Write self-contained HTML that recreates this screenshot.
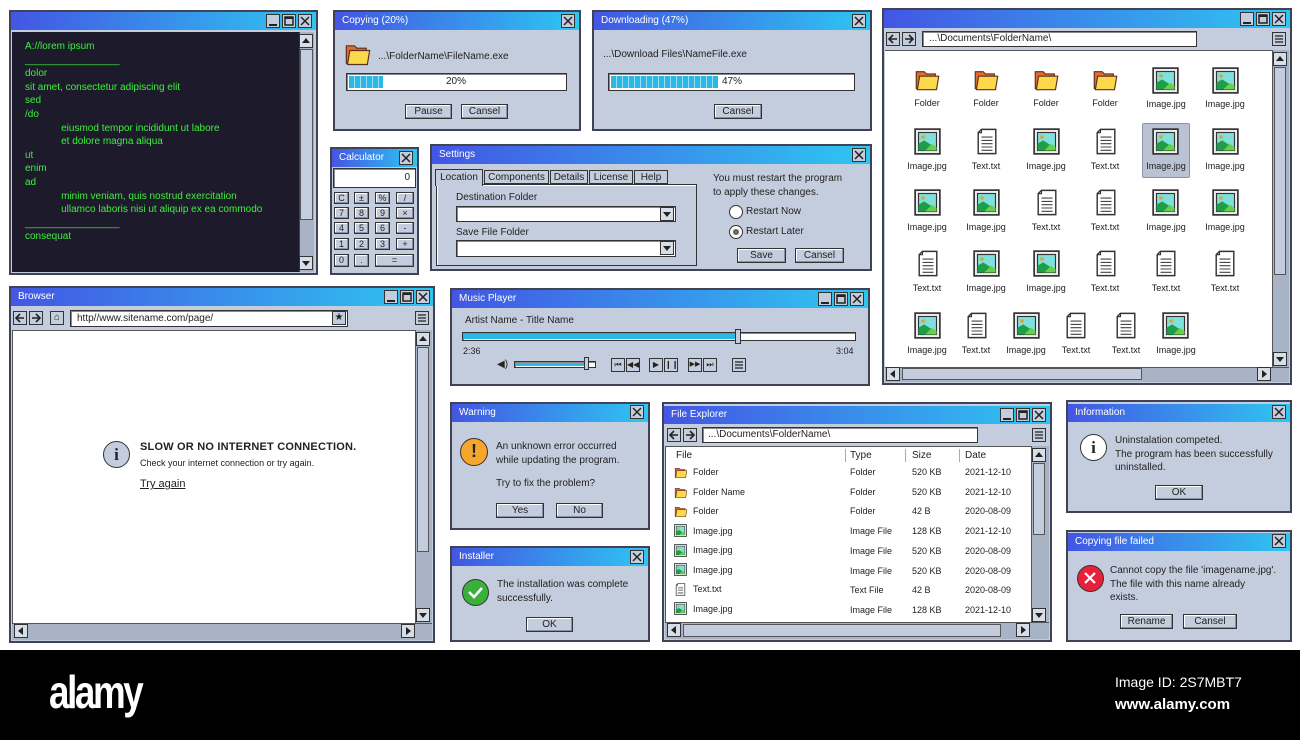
<!DOCTYPE html>
<html><head><meta charset="utf-8"><style>
*{margin:0;padding:0;box-sizing:border-box}
body{width:1300px;height:740px;background:#fff;position:relative;overflow:hidden;font-family:"Liberation Sans",sans-serif;font-size:10px;color:#222}
.a{position:absolute}
.w{position:absolute;background:#c4cddd;border:2px solid #404356}
.t{position:absolute;background:linear-gradient(90deg,#4356e4,#2ec6f1);color:#fff;font-size:10px;line-height:18px;padding-left:7px;height:18px}
.cb{position:absolute;width:14px;height:14px;border:1px solid #333;background:#c4cddd}
.cb svg{display:block}
.btn{position:absolute;border:1px solid #333;background:#c4cddd;box-shadow:inset -1px -1px 0 #8a90a4,inset 1px 1px 0 #fff;text-align:center;font-size:10px;line-height:13px;height:15px}
.in{position:absolute;background:#fff;border:1px solid #333;box-shadow:inset 1px 1px 0 #888}
.g{color:#3cf03c;font-size:10px;line-height:13.6px;white-space:pre}
.sb{position:absolute;background:#a9b3c6;border-left:1px solid #555}
.lbl{position:absolute;font-size:9px;text-align:center;width:60px}
.ic{position:absolute}
.row{position:absolute;font-size:9px}
</style></head><body>
<svg width="0" height="0" style="position:absolute">
<defs>
<symbol id="fo" viewBox="0 0 24 22"><path d="M2 4h7l2 2h8v13H2z" fill="#e4692a" stroke="#5a3020"/><path d="M5 8h17l-2 12H3z" fill="#fbd94a" stroke="#5a3020"/></symbol>
<symbol id="im" viewBox="0 0 24 24"><rect x="1" y="1" width="22" height="22" fill="#eee" stroke="#333" stroke-width="1.5"/><rect x="4" y="4" width="16" height="16" fill="#7fe0dc" stroke="#333"/><circle cx="8" cy="8" r="1.6" fill="#e6a030"/><path d="M4 20v-6l5-3 11 7v2z" fill="#1e9e48"/><path d="M10 20l6-6 4 3v3z" fill="#66d24a"/></symbol>
<symbol id="tx" viewBox="0 0 20 24"><path d="M5 1h13v22H2V4z" fill="#fff" stroke="#333" stroke-width="1.3"/><path d="M5 1v3H2" fill="none" stroke="#333"/><path d="M5 8h10M5 11h10M5 14h10M5 17h10M5 20h10" stroke="#444"/></symbol>
<symbol id="x" viewBox="0 0 12 12"><path d="M2 2l8 8M10 2l-8 8" stroke="#222" stroke-width="1.5"/></symbol>
<symbol id="mn" viewBox="0 0 12 12"><path d="M2 10h8" stroke="#222" stroke-width="2"/></symbol>
<symbol id="mx" viewBox="0 0 12 12"><rect x="2" y="2" width="8" height="8" fill="none" stroke="#222" stroke-width="1.5"/><path d="M2 3h8" stroke="#222" stroke-width="2"/></symbol>
<symbol id="up" viewBox="0 0 12 12"><path d="M2 8l4-5 4 5z" fill="#222"/></symbol>
<symbol id="dn" viewBox="0 0 12 12"><path d="M2 4l4 5 4-5z" fill="#222"/></symbol>
<symbol id="lf" viewBox="0 0 12 12"><path d="M8 2l-5 4 5 4z" fill="#222"/></symbol>
<symbol id="rt" viewBox="0 0 12 12"><path d="M4 2l5 4-5 4z" fill="#222"/></symbol>
<symbol id="bk" viewBox="0 0 12 12"><path d="M10 6H2M6 2L2 6l4 4" fill="none" stroke="#222" stroke-width="1.6"/></symbol>
<symbol id="fw" viewBox="0 0 12 12"><path d="M2 6h8M6 2l4 4-4 4" fill="none" stroke="#222" stroke-width="1.6"/></symbol>
<symbol id="mu" viewBox="0 0 12 12"><path d="M2 3h8M2 6h8M2 9h8" stroke="#222" stroke-width="1.2"/></symbol>
</defs></svg>

<!-- Terminal -->
<div class="w" style="left:9px;top:10px;width:309px;height:265px"></div>
<div class="t" style="left:11px;top:12px;width:305px"></div>
<div class="cb" style="left:266px;top:14px"><svg width="12" height="12"><use href="#mn"/></svg></div>
<div class="cb" style="left:282px;top:14px"><svg width="12" height="12"><use href="#mx"/></svg></div>
<div class="cb" style="left:298px;top:14px"><svg width="12" height="12"><use href="#x"/></svg></div>
<div class="a" style="left:12px;top:32px;width:287px;height:240px;background:#1d1b2b"></div>
<div class="a" style="left:299px;top:32px;width:15px;height:240px;background:#a9b3c6;border-left:1px solid #444"></div>
<div class="cb" style="left:299px;top:34px;background:#d8dee8"><svg width="12" height="12"><use href="#up"/></svg></div>
<div class="a" style="left:300px;top:49px;width:13px;height:171px;background:#c4cddd;border:1px solid #555"></div>
<div class="cb" style="left:299px;top:256px;background:#d8dee8"><svg width="12" height="12"><use href="#dn"/></svg></div>
<div class="a g" style="left:25px;top:40px">A://lorem ipsum
_________________
dolor
sit amet, consectetur adipiscing elit
sed
/do
             eiusmod tempor incididunt ut labore
             et dolore magna aliqua
ut
enim
ad
             minim veniam, quis nostrud exercitation
             ullamco laboris nisi ut aliquip ex ea commodo
_________________
consequat</div>

<!-- Copying -->
<div class="w" style="left:333px;top:10px;width:248px;height:121px"></div>
<div class="t" style="left:335px;top:12px;width:244px">Copying (20%)</div>
<div class="cb" style="left:561px;top:14px"><svg width="12" height="12"><use href="#x"/></svg></div>
<svg class="ic" style="left:344px;top:41px" width="28" height="26"><use href="#fo"/></svg>
<div class="a" style="left:378px;top:51px;font-size:10px">...\FolderName\FileName.exe</div>
<div class="in" style="left:346px;top:73px;width:221px;height:18px"></div>
<div class="a" style="left:349px;top:76px;width:34px;height:12px;background:repeating-linear-gradient(90deg,#2bb8e6 0 5px,#9be0f5 5px 6px)"></div>
<div class="a" style="left:446px;top:76px">20%</div>
<div class="btn" style="left:405px;top:104px;width:47px">Pause</div>
<div class="btn" style="left:461px;top:104px;width:47px">Cansel</div>

<!-- Downloading -->
<div class="w" style="left:592px;top:10px;width:280px;height:121px"></div>
<div class="t" style="left:594px;top:12px;width:276px">Downloading (47%)</div>
<div class="cb" style="left:852px;top:14px"><svg width="12" height="12"><use href="#x"/></svg></div>
<div class="a" style="left:603px;top:49px">...\Download Files\NameFile.exe</div>
<div class="in" style="left:608px;top:73px;width:247px;height:18px"></div>
<div class="a" style="left:611px;top:76px;width:107px;height:12px;background:repeating-linear-gradient(90deg,#2bb8e6 0 5px,#9be0f5 5px 6px)"></div>
<div class="a" style="left:722px;top:76px">47%</div>
<div class="btn" style="left:714px;top:104px;width:48px">Cansel</div>

<!-- Calculator -->
<div class="w" style="left:330px;top:147px;width:89px;height:128px"></div>
<div class="t" style="left:332px;top:149px;width:85px">Calculator</div>
<div class="cb" style="left:399px;top:151px"><svg width="12" height="12"><use href="#x"/></svg></div>
<div class="in" style="left:333px;top:168px;width:83px;height:20px"><span class="a" style="right:5px;top:3px">0</span></div>
<div class="btn" style="left:334px;top:192px;width:15px;height:12px;line-height:10px;font-size:9px">C</div>
<div class="btn" style="left:354px;top:192px;width:15px;height:12px;line-height:10px;font-size:9px">±</div>
<div class="btn" style="left:375px;top:192px;width:15px;height:12px;line-height:10px;font-size:9px">%</div>
<div class="btn" style="left:396px;top:192px;width:18px;height:12px;line-height:10px;font-size:9px">/</div>
<div class="btn" style="left:334px;top:207px;width:15px;height:12px;line-height:10px;font-size:9px">7</div>
<div class="btn" style="left:354px;top:207px;width:15px;height:12px;line-height:10px;font-size:9px">8</div>
<div class="btn" style="left:375px;top:207px;width:15px;height:12px;line-height:10px;font-size:9px">9</div>
<div class="btn" style="left:396px;top:207px;width:18px;height:12px;line-height:10px;font-size:9px">×</div>
<div class="btn" style="left:334px;top:222px;width:15px;height:12px;line-height:10px;font-size:9px">4</div>
<div class="btn" style="left:354px;top:222px;width:15px;height:12px;line-height:10px;font-size:9px">5</div>
<div class="btn" style="left:375px;top:222px;width:15px;height:12px;line-height:10px;font-size:9px">6</div>
<div class="btn" style="left:396px;top:222px;width:18px;height:12px;line-height:10px;font-size:9px">-</div>
<div class="btn" style="left:334px;top:238px;width:15px;height:12px;line-height:10px;font-size:9px">1</div>
<div class="btn" style="left:354px;top:238px;width:15px;height:12px;line-height:10px;font-size:9px">2</div>
<div class="btn" style="left:375px;top:238px;width:15px;height:12px;line-height:10px;font-size:9px">3</div>
<div class="btn" style="left:396px;top:238px;width:18px;height:12px;line-height:10px;font-size:9px">+</div>
<div class="btn" style="left:334px;top:254px;width:15px;height:13px;line-height:11px;font-size:9px">0</div>
<div class="btn" style="left:354px;top:254px;width:15px;height:13px;line-height:11px;font-size:9px">.</div>
<div class="btn" style="left:375px;top:254px;width:39px;height:13px;line-height:11px;font-size:9px">=</div>

<!-- Settings -->
<div class="w" style="left:430px;top:144px;width:442px;height:127px"></div>
<div class="t" style="left:432px;top:146px;width:438px">Settings</div>
<div class="cb" style="left:852px;top:148px"><svg width="12" height="12"><use href="#x"/></svg></div>
<div class="a" style="left:436px;top:184px;width:261px;height:82px;border:1px solid #333;box-shadow:inset 1px 1px 0 #fff"></div>
<div class="a" style="left:435px;top:169px;width:48px;height:17px;border:1px solid #333;border-bottom:none;background:#c4cddd;text-align:center;line-height:15px">Location</div>
<div class="a" style="left:484px;top:170px;width:65px;height:14px;border:1px solid #333;text-align:center;line-height:13px">Components</div>
<div class="a" style="left:550px;top:170px;width:38px;height:14px;border:1px solid #333;text-align:center;line-height:13px">Details</div>
<div class="a" style="left:589px;top:170px;width:44px;height:14px;border:1px solid #333;text-align:center;line-height:13px">License</div>
<div class="a" style="left:634px;top:170px;width:34px;height:14px;border:1px solid #333;text-align:center;line-height:13px">Help</div>
<div class="a" style="left:456px;top:192px">Destination Folder</div>
<div class="in" style="left:456px;top:206px;width:220px;height:16px"></div>
<div class="cb" style="left:660px;top:207px;background:#d8dee8"><svg width="12" height="12"><use href="#dn"/></svg></div>
<div class="a" style="left:456px;top:227px">Save File Folder</div>
<div class="in" style="left:456px;top:240px;width:220px;height:17px"></div>
<div class="cb" style="left:660px;top:241px;background:#d8dee8"><svg width="12" height="12"><use href="#dn"/></svg></div>
<div class="a" style="left:713px;top:172px;line-height:14px">You must restart the program<br>to apply these changes.</div>
<div class="a" style="left:729px;top:205px;width:14px;height:14px;border-radius:50%;background:#fff;border:1px solid #333"></div>
<div class="a" style="left:746px;top:206px">Restart Now</div>
<div class="a" style="left:729px;top:225px;width:14px;height:14px;border-radius:50%;background:#fff;border:1px solid #333"><div class="a" style="left:3px;top:3px;width:6px;height:6px;border-radius:50%;background:#666"></div></div>
<div class="a" style="left:746px;top:226px">Restart Later</div>
<div class="btn" style="left:737px;top:248px;width:49px">Save</div>
<div class="btn" style="left:795px;top:248px;width:49px">Cansel</div>

<!-- Explorer icons -->
<div class="w" style="left:882px;top:8px;width:410px;height:377px"></div>
<div class="t" style="left:884px;top:10px;width:406px"></div>
<div class="cb" style="left:1240px;top:12px"><svg width="12" height="12"><use href="#mn"/></svg></div>
<div class="cb" style="left:1256px;top:12px"><svg width="12" height="12"><use href="#mx"/></svg></div>
<div class="cb" style="left:1272px;top:12px"><svg width="12" height="12"><use href="#x"/></svg></div>
<div class="cb" style="left:886px;top:32px"><svg width="12" height="12"><use href="#bk"/></svg></div>
<div class="cb" style="left:902px;top:32px"><svg width="12" height="12"><use href="#fw"/></svg></div>
<div class="in" style="left:922px;top:31px;width:275px;height:16px;padding-left:6px;line-height:14px">...\Documents\FolderName\</div>
<div class="cb" style="left:1272px;top:32px"><svg width="12" height="12"><use href="#mu"/></svg></div>
<div class="a" style="left:885px;top:50px;width:387px;height:317px;background:#fff;border-top:1px solid #555"></div>
<div class="a" style="left:1272px;top:50px;width:17px;height:317px;background:#a9b3c6;border-left:1px solid #555"></div>
<div class="cb" style="left:1273px;top:52px;background:#d8dee8"><svg width="12" height="12"><use href="#up"/></svg></div>
<div class="a" style="left:1274px;top:67px;width:12px;height:208px;background:#c4cddd;border:1px solid #555"></div>
<div class="cb" style="left:1273px;top:352px;background:#d8dee8"><svg width="12" height="12"><use href="#dn"/></svg></div>
<div class="a" style="left:885px;top:367px;width:404px;height:15px;background:#a9b3c6;border-top:1px solid #555"></div>
<div class="cb" style="left:886px;top:367px;background:#d8dee8"><svg width="12" height="12"><use href="#lf"/></svg></div>
<div class="a" style="left:902px;top:368px;width:240px;height:12px;background:#c4cddd;border:1px solid #555"></div>
<div class="cb" style="left:1257px;top:367px;background:#d8dee8"><svg width="12" height="12"><use href="#rt"/></svg></div>
<div class="a" style="left:1142px;top:123px;width:48px;height:55px;background:#b9c3d3;border:1px solid #8a93a8;border-radius:2px"></div>

<!-- row1 -->
<svg class="ic" style="left:914px;top:67px" width="27" height="25"><use href="#fo"/></svg><div class="lbl" style="left:897px;top:98px">Folder</div>
<svg class="ic" style="left:973px;top:67px" width="27" height="25"><use href="#fo"/></svg><div class="lbl" style="left:956px;top:98px">Folder</div>
<svg class="ic" style="left:1033px;top:67px" width="27" height="25"><use href="#fo"/></svg><div class="lbl" style="left:1016px;top:98px">Folder</div>
<svg class="ic" style="left:1092px;top:67px" width="27" height="25"><use href="#fo"/></svg><div class="lbl" style="left:1075px;top:98px">Folder</div>
<svg class="ic" style="left:1152px;top:67px" width="27" height="27"><use href="#im"/></svg><div class="lbl" style="left:1136px;top:99px">Image.jpg</div>
<svg class="ic" style="left:1212px;top:67px" width="27" height="27"><use href="#im"/></svg><div class="lbl" style="left:1195px;top:99px">Image.jpg</div>
<!-- row2 -->
<svg class="ic" style="left:914px;top:128px" width="27" height="27"><use href="#im"/></svg><div class="lbl" style="left:897px;top:161px">Image.jpg</div>
<svg class="ic" style="left:976px;top:128px" width="22" height="27"><use href="#tx"/></svg><div class="lbl" style="left:956px;top:161px">Text.txt</div>
<svg class="ic" style="left:1033px;top:128px" width="27" height="27"><use href="#im"/></svg><div class="lbl" style="left:1016px;top:161px">Image.jpg</div>
<svg class="ic" style="left:1095px;top:128px" width="22" height="27"><use href="#tx"/></svg><div class="lbl" style="left:1075px;top:161px">Text.txt</div>
<svg class="ic" style="left:1152px;top:128px" width="27" height="27"><use href="#im"/></svg><div class="lbl" style="left:1136px;top:161px">Image.jpg</div>
<svg class="ic" style="left:1212px;top:128px" width="27" height="27"><use href="#im"/></svg><div class="lbl" style="left:1195px;top:161px">Image.jpg</div>
<!-- row3 -->
<svg class="ic" style="left:914px;top:189px" width="27" height="27"><use href="#im"/></svg><div class="lbl" style="left:897px;top:222px">Image.jpg</div>
<svg class="ic" style="left:973px;top:189px" width="27" height="27"><use href="#im"/></svg><div class="lbl" style="left:956px;top:222px">Image.jpg</div>
<svg class="ic" style="left:1036px;top:189px" width="22" height="27"><use href="#tx"/></svg><div class="lbl" style="left:1016px;top:222px">Text.txt</div>
<svg class="ic" style="left:1095px;top:189px" width="22" height="27"><use href="#tx"/></svg><div class="lbl" style="left:1075px;top:222px">Text.txt</div>
<svg class="ic" style="left:1152px;top:189px" width="27" height="27"><use href="#im"/></svg><div class="lbl" style="left:1136px;top:222px">Image.jpg</div>
<svg class="ic" style="left:1212px;top:189px" width="27" height="27"><use href="#im"/></svg><div class="lbl" style="left:1195px;top:222px">Image.jpg</div>
<!-- row4 -->
<svg class="ic" style="left:917px;top:250px" width="22" height="27"><use href="#tx"/></svg><div class="lbl" style="left:897px;top:283px">Text.txt</div>
<svg class="ic" style="left:973px;top:250px" width="27" height="27"><use href="#im"/></svg><div class="lbl" style="left:956px;top:283px">Image.jpg</div>
<svg class="ic" style="left:1033px;top:250px" width="27" height="27"><use href="#im"/></svg><div class="lbl" style="left:1016px;top:283px">Image.jpg</div>
<svg class="ic" style="left:1095px;top:250px" width="22" height="27"><use href="#tx"/></svg><div class="lbl" style="left:1075px;top:283px">Text.txt</div>
<svg class="ic" style="left:1155px;top:250px" width="22" height="27"><use href="#tx"/></svg><div class="lbl" style="left:1136px;top:283px">Text.txt</div>
<svg class="ic" style="left:1214px;top:250px" width="22" height="27"><use href="#tx"/></svg><div class="lbl" style="left:1195px;top:283px">Text.txt</div>
<!-- row5 -->
<svg class="ic" style="left:914px;top:312px" width="27" height="27"><use href="#im"/></svg><div class="lbl" style="left:897px;top:345px">Image.jpg</div>
<svg class="ic" style="left:966px;top:312px" width="22" height="27"><use href="#tx"/></svg><div class="lbl" style="left:946px;top:345px">Text.txt</div>
<svg class="ic" style="left:1013px;top:312px" width="27" height="27"><use href="#im"/></svg><div class="lbl" style="left:996px;top:345px">Image.jpg</div>
<svg class="ic" style="left:1065px;top:312px" width="22" height="27"><use href="#tx"/></svg><div class="lbl" style="left:1046px;top:345px">Text.txt</div>
<svg class="ic" style="left:1115px;top:312px" width="22" height="27"><use href="#tx"/></svg><div class="lbl" style="left:1096px;top:345px">Text.txt</div>
<svg class="ic" style="left:1162px;top:312px" width="27" height="27"><use href="#im"/></svg><div class="lbl" style="left:1146px;top:345px">Image.jpg</div>

<!-- Browser -->
<div class="w" style="left:9px;top:286px;width:426px;height:357px"></div>
<div class="t" style="left:11px;top:288px;width:422px">Browser</div>
<div class="cb" style="left:384px;top:290px"><svg width="12" height="12"><use href="#mn"/></svg></div>
<div class="cb" style="left:400px;top:290px"><svg width="12" height="12"><use href="#mx"/></svg></div>
<div class="cb" style="left:416px;top:290px"><svg width="12" height="12"><use href="#x"/></svg></div>
<div class="cb" style="left:13px;top:311px"><svg width="12" height="12"><use href="#bk"/></svg></div>
<div class="cb" style="left:29px;top:311px"><svg width="12" height="12"><use href="#fw"/></svg></div>
<div class="cb" style="left:50px;top:311px;font-size:10px;text-align:center;line-height:12px">⌂</div>
<div class="in" style="left:70px;top:310px;width:278px;height:17px;padding-left:6px;line-height:15px">http//www.sitename.com/page/</div>
<div class="cb" style="left:332px;top:311px;font-size:10px;text-align:center;line-height:12px">★</div>
<div class="cb" style="left:415px;top:311px"><svg width="12" height="12"><use href="#mu"/></svg></div>
<div class="a" style="left:12px;top:330px;width:403px;height:293px;background:#fff;border-top:1px solid #555;border-left:1px solid #555"></div>
<div class="a" style="left:415px;top:330px;width:17px;height:293px;background:#a9b3c6;border-left:1px solid #555"></div>
<div class="cb" style="left:416px;top:332px;background:#d8dee8"><svg width="12" height="12"><use href="#up"/></svg></div>
<div class="a" style="left:417px;top:347px;width:12px;height:205px;background:#c4cddd;border:1px solid #555"></div>
<div class="cb" style="left:416px;top:608px;background:#d8dee8"><svg width="12" height="12"><use href="#dn"/></svg></div>
<div class="a" style="left:12px;top:623px;width:420px;height:17px;background:#a9b3c6;border-top:1px solid #555"></div>
<div class="cb" style="left:14px;top:624px;background:#d8dee8"><svg width="12" height="12"><use href="#lf"/></svg></div>
<div class="cb" style="left:401px;top:624px;background:#d8dee8"><svg width="12" height="12"><use href="#rt"/></svg></div>
<div class="a" style="left:103px;top:441px;width:27px;height:27px;border-radius:50%;border:1.5px solid #333;background:#c4cddd;text-align:center;font:bold 17px/25px 'Liberation Serif',serif">i</div>
<div class="a" style="left:140px;top:441px;font-size:11px;font-weight:bold;letter-spacing:.2px">SLOW OR NO INTERNET CONNECTION.</div>
<div class="a" style="left:140px;top:458px;font-size:9px">Check your internet connection or try again.</div>
<div class="a" style="left:140px;top:478px;font-size:11px;text-decoration:underline">Try again</div>

<!-- Music player -->
<div class="w" style="left:450px;top:288px;width:420px;height:98px"></div>
<div class="t" style="left:452px;top:290px;width:416px">Music Player</div>
<div class="cb" style="left:818px;top:292px"><svg width="12" height="12"><use href="#mn"/></svg></div>
<div class="cb" style="left:834px;top:292px"><svg width="12" height="12"><use href="#mx"/></svg></div>
<div class="cb" style="left:850px;top:292px"><svg width="12" height="12"><use href="#x"/></svg></div>
<div class="a" style="left:465px;top:315px">Artist Name - Title Name</div>
<div class="in" style="left:462px;top:332px;width:394px;height:9px"></div>
<div class="a" style="left:464px;top:334px;width:272px;height:5px;background:#2bb8e6"></div>
<div class="a" style="left:735px;top:329px;width:6px;height:15px;background:#c4cddd;border:1px solid #333"></div>
<div class="a" style="left:463px;top:346px;font-size:9px">2:36</div>
<div class="a" style="left:836px;top:346px;font-size:9px">3:04</div>
<div class="a" style="left:497px;top:359px;font-size:10px">◀)</div>
<div class="in" style="left:514px;top:361px;width:82px;height:7px"></div>
<div class="a" style="left:516px;top:363px;width:68px;height:3px;background:#2bb8e6"></div>
<div class="a" style="left:584px;top:357px;width:5px;height:13px;background:#c4cddd;border:1px solid #333"></div>
<div class="cb" style="left:611px;top:358px;font-size:8px;text-align:center;line-height:12px">⏮</div>
<div class="cb" style="left:626px;top:358px;font-size:8px;text-align:center;line-height:12px">◀◀</div>
<div class="cb" style="left:649px;top:358px;font-size:8px;text-align:center;line-height:12px">▶</div>
<div class="cb" style="left:664px;top:358px;font-size:8px;text-align:center;line-height:12px">❙❙</div>
<div class="cb" style="left:688px;top:358px;font-size:7px;text-align:center;line-height:12px">▶▶</div>
<div class="cb" style="left:703px;top:358px;font-size:8px;text-align:center;line-height:12px">⏭</div>
<div class="cb" style="left:732px;top:358px"><svg width="12" height="12"><use href="#mu"/></svg></div>

<!-- Warning -->
<div class="w" style="left:450px;top:402px;width:200px;height:128px"></div>
<div class="t" style="left:452px;top:404px;width:196px">Warning</div>
<div class="cb" style="left:630px;top:405px"><svg width="12" height="12"><use href="#x"/></svg></div>
<div class="a" style="left:460px;top:438px;width:28px;height:28px;border-radius:50%;background:#f6a62a;border:1.5px solid #333;text-align:center;font:bold 18px/25px 'Liberation Sans',sans-serif">!</div>
<div class="a" style="left:496px;top:440px;line-height:13.5px">An unknown error occurred<br>while updating the program.</div>
<div class="a" style="left:496px;top:478px">Try to fix the problem?</div>
<div class="btn" style="left:496px;top:503px;width:48px">Yes</div>
<div class="btn" style="left:556px;top:503px;width:47px">No</div>

<!-- Installer -->
<div class="w" style="left:450px;top:546px;width:200px;height:96px"></div>
<div class="t" style="left:452px;top:548px;width:196px">Installer</div>
<div class="cb" style="left:630px;top:550px"><svg width="12" height="12"><use href="#x"/></svg></div>
<div class="a" style="left:462px;top:579px;width:27px;height:27px;border-radius:50%;background:#3ab03a;border:1.5px solid #333"><svg width="24" height="24"><path d="M6 12l5 5 8-9" fill="none" stroke="#fff" stroke-width="2.5"/></svg></div>
<div class="a" style="left:497px;top:578px;line-height:13.5px">The installation was complete<br>successfully.</div>
<div class="btn" style="left:526px;top:617px;width:47px">OK</div>

<!-- File Explorer -->
<div class="w" style="left:662px;top:402px;width:390px;height:240px"></div>
<div class="t" style="left:664px;top:406px;width:386px">File Explorer</div>
<div class="cb" style="left:1000px;top:408px"><svg width="12" height="12"><use href="#mn"/></svg></div>
<div class="cb" style="left:1016px;top:408px"><svg width="12" height="12"><use href="#mx"/></svg></div>
<div class="cb" style="left:1032px;top:408px"><svg width="12" height="12"><use href="#x"/></svg></div>
<div class="cb" style="left:667px;top:428px"><svg width="12" height="12"><use href="#bk"/></svg></div>
<div class="cb" style="left:683px;top:428px"><svg width="12" height="12"><use href="#fw"/></svg></div>
<div class="in" style="left:702px;top:427px;width:276px;height:16px;padding-left:5px;line-height:14px">...\Documents\FolderName\</div>
<div class="cb" style="left:1032px;top:428px"><svg width="12" height="12"><use href="#mu"/></svg></div>
<div class="a" style="left:665px;top:446px;width:366px;height:176px;background:#fff;border-top:1px solid #555;border-left:1px solid #555"></div>
<div class="a" style="left:1031px;top:446px;width:18px;height:176px;background:#a9b3c6;border-left:1px solid #555"></div>
<div class="cb" style="left:1032px;top:448px;background:#d8dee8"><svg width="12" height="12"><use href="#up"/></svg></div>
<div class="a" style="left:1033px;top:463px;width:12px;height:72px;background:#c4cddd;border:1px solid #555"></div>
<div class="cb" style="left:1032px;top:608px;background:#d8dee8"><svg width="12" height="12"><use href="#dn"/></svg></div>
<div class="a" style="left:665px;top:622px;width:384px;height:17px;background:#a9b3c6;border-top:1px solid #555"></div>
<div class="cb" style="left:667px;top:623px;background:#d8dee8"><svg width="12" height="12"><use href="#lf"/></svg></div>
<div class="a" style="left:683px;top:624px;width:318px;height:13px;background:#c4cddd;border:1px solid #555"></div>
<div class="cb" style="left:1016px;top:623px;background:#d8dee8"><svg width="12" height="12"><use href="#rt"/></svg></div>
<div class="row" style="left:676px;top:450px;font-size:10px">File</div>
<div class="a" style="left:845px;top:449px;width:1px;height:13px;background:#aaa"></div>
<div class="row" style="left:850px;top:450px;font-size:10px">Type</div>
<div class="a" style="left:905px;top:449px;width:1px;height:13px;background:#aaa"></div>
<div class="row" style="left:912px;top:450px;font-size:10px">Size</div>
<div class="a" style="left:959px;top:449px;width:1px;height:13px;background:#aaa"></div>
<div class="row" style="left:965px;top:450px;font-size:10px">Date</div>

<svg class="ic" style="left:674px;top:466px" width="14" height="13"><use href="#fo"/></svg><div class="row" style="left:693px;top:467px">Folder</div><div class="row" style="left:850px;top:467px">Folder</div><div class="row" style="left:912px;top:467px">520 KB</div><div class="row" style="left:965px;top:467px">2021-12-10</div>
<svg class="ic" style="left:674px;top:486px" width="14" height="13"><use href="#fo"/></svg><div class="row" style="left:693px;top:487px">Folder Name</div><div class="row" style="left:850px;top:487px">Folder</div><div class="row" style="left:912px;top:487px">520 KB</div><div class="row" style="left:965px;top:487px">2021-12-10</div>
<svg class="ic" style="left:674px;top:505px" width="14" height="13"><use href="#fo"/></svg><div class="row" style="left:693px;top:506px">Folder</div><div class="row" style="left:850px;top:506px">Folder</div><div class="row" style="left:912px;top:506px">42 B</div><div class="row" style="left:965px;top:506px">2020-08-09</div>
<svg class="ic" style="left:674px;top:524px" width="13" height="13"><use href="#im"/></svg><div class="row" style="left:693px;top:526px">Image.jpg</div><div class="row" style="left:850px;top:526px">Image File</div><div class="row" style="left:912px;top:526px">128 KB</div><div class="row" style="left:965px;top:526px">2021-12-10</div>
<svg class="ic" style="left:674px;top:544px" width="13" height="13"><use href="#im"/></svg><div class="row" style="left:693px;top:545px">Image.jpg</div><div class="row" style="left:850px;top:546px">Image File</div><div class="row" style="left:912px;top:546px">520 KB</div><div class="row" style="left:965px;top:546px">2020-08-09</div>
<svg class="ic" style="left:674px;top:563px" width="13" height="13"><use href="#im"/></svg><div class="row" style="left:693px;top:565px">Image.jpg</div><div class="row" style="left:850px;top:566px">Image File</div><div class="row" style="left:912px;top:566px">520 KB</div><div class="row" style="left:965px;top:566px">2020-08-09</div>
<svg class="ic" style="left:675px;top:583px" width="11" height="13"><use href="#tx"/></svg><div class="row" style="left:693px;top:584px">Text.txt</div><div class="row" style="left:850px;top:585px">Text File</div><div class="row" style="left:912px;top:585px">42 B</div><div class="row" style="left:965px;top:585px">2020-08-09</div>
<svg class="ic" style="left:674px;top:602px" width="13" height="13"><use href="#im"/></svg><div class="row" style="left:693px;top:604px">Image.jpg</div><div class="row" style="left:850px;top:605px">Image File</div><div class="row" style="left:912px;top:605px">128 KB</div><div class="row" style="left:965px;top:605px">2021-12-10</div>

<!-- Information -->
<div class="w" style="left:1066px;top:400px;width:226px;height:113px"></div>
<div class="t" style="left:1068px;top:404px;width:222px">Information</div>
<div class="cb" style="left:1272px;top:405px"><svg width="12" height="12"><use href="#x"/></svg></div>
<div class="a" style="left:1080px;top:434px;width:27px;height:27px;border-radius:50%;background:#fff;border:1.5px solid #333;text-align:center;font:bold 17px/25px 'Liberation Serif',serif">i</div>
<div class="a" style="left:1115px;top:434px;line-height:13.5px">Uninstalation competed.<br>The program has been successfully<br>uninstalled.</div>
<div class="btn" style="left:1155px;top:485px;width:48px">OK</div>

<!-- Copying failed -->
<div class="w" style="left:1066px;top:530px;width:226px;height:112px"></div>
<div class="t" style="left:1068px;top:533px;width:222px">Copying file failed</div>
<div class="cb" style="left:1272px;top:534px"><svg width="12" height="12"><use href="#x"/></svg></div>
<div class="a" style="left:1077px;top:565px;width:27px;height:27px;border-radius:50%;background:#e8203c;border:1.5px solid #333"><svg width="24" height="24"><path d="M7 7l10 10M17 7L7 17" stroke="#fff" stroke-width="2.2"/></svg></div>
<div class="a" style="left:1110px;top:564px;line-height:13.5px">Cannot copy the file 'imagename.jpg'.<br>The file with this name already<br>exists.</div>
<div class="btn" style="left:1120px;top:614px;width:53px">Rename</div>
<div class="btn" style="left:1183px;top:614px;width:54px">Cansel</div>

<!-- footer -->
<div class="a" style="left:0;top:650px;width:1300px;height:90px;background:#000"></div>
<div class="a" style="left:49px;top:662px;color:#fff;font:bold 46px/60px 'Liberation Sans Narrow','Liberation Sans',sans-serif;letter-spacing:-3px;transform:scaleX(.8);transform-origin:left">alamy</div>
<div class="a" style="left:1115px;top:674px;color:#fff;font-size:14px">Image ID: 2S7MBT7</div>
<div class="a" style="left:1115px;top:696px;color:#fff;font-size:15px;font-weight:bold">www.alamy.com</div>
</body></html>
